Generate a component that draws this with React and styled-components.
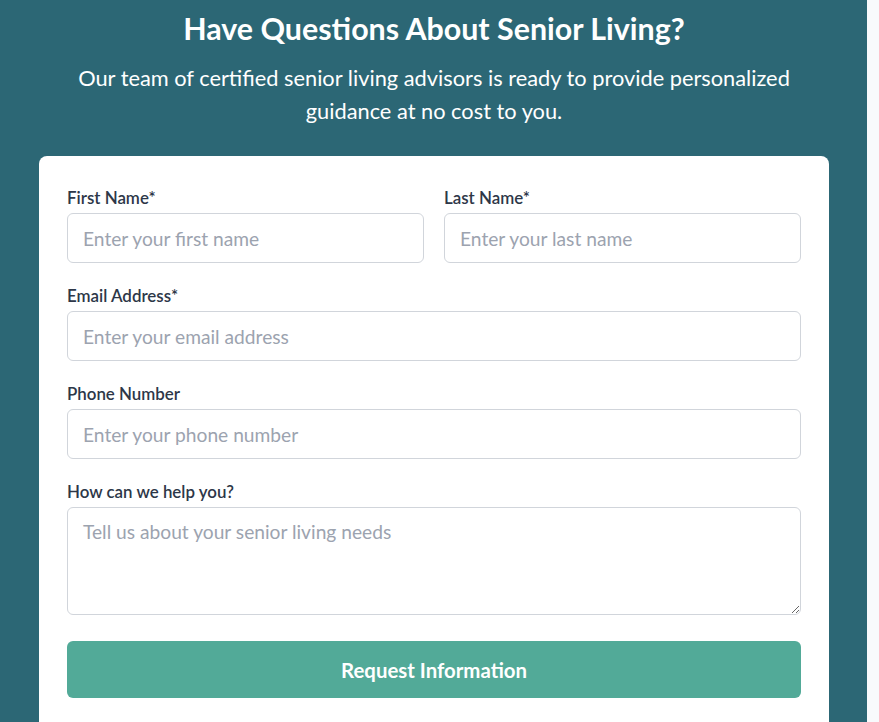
import React from "react";
import styled, { createGlobalStyle } from "styled-components";

const Global = createGlobalStyle`
  html, body { margin: 0; padding: 0; }
  body {
    background: #f8fafc;
    font-family: "Lato", "Open Sans", sans-serif;
  }
  * { box-sizing: border-box; }
`;

const Section = styled.section`
  width: calc(100% - 12px);
  min-height: 722px;
  background: #2c6775;
  padding: 11px 38px 40px 39px;
  display: flex;
  flex-direction: column;
  align-items: center;
`;

const Title = styled.h2`
  margin: 0 0 16px;
  color: #ffffff;
  font-size: 30.4px;
  line-height: 34px;
  font-weight: 700;
  text-align: center;
`;

const Subtitle = styled.p`
  margin: 0 0 29px;
  max-width: 740px;
  color: #ffffff;
  font-size: 21.8px;
  line-height: 33px;
  text-align: center;
`;

const Card = styled.form`
  width: 100%;
  background: #ffffff;
  border-radius: 8px;
  padding: 31px 28px 40px;
  display: flex;
  flex-direction: column;
  gap: 22px;
`;

const Row = styled.div`
  display: grid;
  grid-template-columns: 1fr 1fr;
  gap: 20px;
`;

const Field = styled.div`
  display: flex;
  flex-direction: column;
  gap: 4px;
`;

const Label = styled.label`
  color: #2d3748;
  font-size: 16.9px;
  line-height: 22px;
  font-weight: 600;
`;

const inputBase = `
  width: 100%;
  border: 1px solid #d1d5db;
  border-radius: 6px;
  background: #ffffff;
  font-family: "Lato", "Open Sans", sans-serif;
  font-size: 19.2px;
  color: #2d3748;
  outline: none;
  &::placeholder { color: #9ca3af; }
`;

const Input = styled.input`
  ${inputBase}
  height: 50px;
  padding: 0 15px;
`;

const TextArea = styled.textarea`
  ${inputBase}
  height: 108px;
  padding: 11px 15px;
  line-height: 26px;
  resize: vertical;
  display: block;
`;

const Button = styled.button`
  margin-top: 4px;
  height: 57px;
  width: 100%;
  border: none;
  border-radius: 6px;
  background: #52aa98;
  color: #ffffff;
  font-family: "Lato", "Open Sans", sans-serif;
  font-size: 20.4px;
  font-weight: 700;
  cursor: pointer;
`;

export default function App() {
  return (
    <>
      <Global />
      <Section>
        <Title>Have Questions About Senior Living?</Title>
        <Subtitle>
          Our team of certified senior living advisors is ready to provide personalized
          guidance at no cost to you.
        </Subtitle>
        <Card onSubmit={(e) => e.preventDefault()}>
          <Row>
            <Field>
              <Label>First Name*</Label>
              <Input placeholder="Enter your first name" />
            </Field>
            <Field>
              <Label>Last Name*</Label>
              <Input placeholder="Enter your last name" />
            </Field>
          </Row>
          <Field>
            <Label>Email Address*</Label>
            <Input type="email" placeholder="Enter your email address" />
          </Field>
          <Field>
            <Label>Phone Number</Label>
            <Input type="tel" placeholder="Enter your phone number" />
          </Field>
          <Field>
            <Label>How can we help you?</Label>
            <TextArea placeholder="Tell us about your senior living needs" />
          </Field>
          <Button type="submit">Request Information</Button>
        </Card>
      </Section>
    </>
  );
}
